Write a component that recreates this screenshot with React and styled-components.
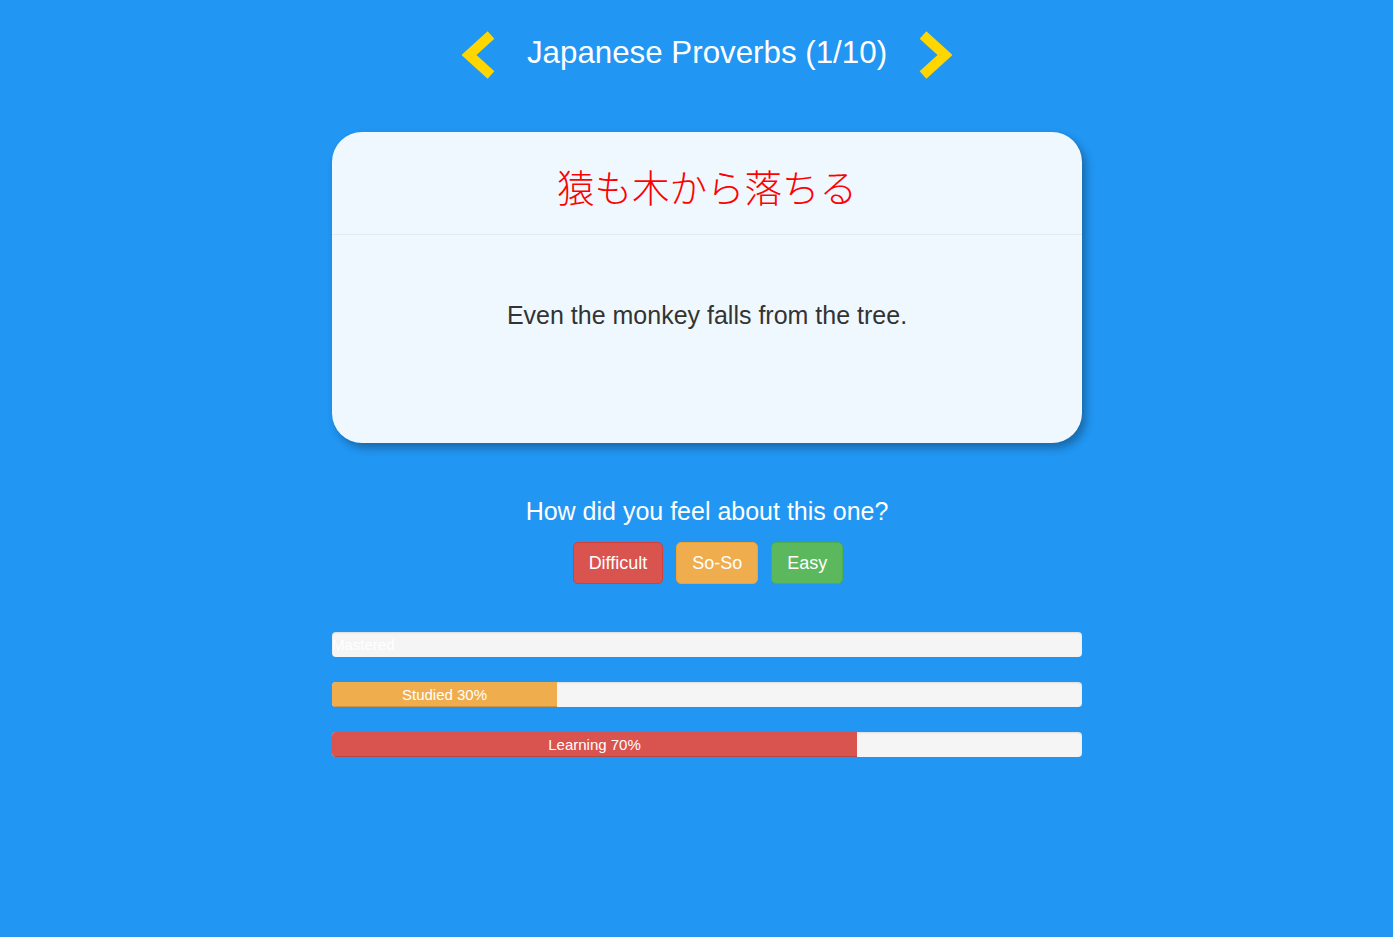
import React from 'react';
import styled, { createGlobalStyle } from 'styled-components';

const GlobalStyle = createGlobalStyle`
  html, body {
    margin: 0;
    padding: 0;
    background: #2196f3;
  }
  body {
    font-family: "Liberation Sans", Arial, sans-serif;
    min-height: 937px;
  }
`;

const progress = [
  { label: 'Mastered', value: 0, color: '#5cb85c' },
  { label: 'Studied', value: 30, color: '#f0ad4e' },
  { label: 'Learning', value: 70, color: '#d9534f' }
];

const Chevron = ({ dir }) => (
  <svg width="34" height="48" viewBox="0 0 34 48">
    <polyline
      points={dir === 'left' ? '29,4 7,24 29,44' : '5,4 27,24 5,44'}
      fill="none"
      stroke="#ffd600"
      strokeWidth="10"
      strokeLinejoin="miter"
    />
  </svg>
);

export default function App() {
  return (
    <Page>
      <GlobalStyle />
      <Header>
        <NavButton><Chevron dir="left" /></NavButton>
        <Title>Japanese Proverbs (1/10)</Title>
        <NavButton><Chevron dir="right" /></NavButton>
      </Header>

      <Card>
        <CardHead>猿も木から落ちる</CardHead>
        <CardBody>Even the monkey falls from the tree.</CardBody>
      </Card>

      <Question>How did you feel about this one?</Question>
      <Buttons>
        <RateButton $bg="#d9534f" $border="#d43f3a">Difficult</RateButton>
        <RateButton $bg="#f0ad4e" $border="#eea236">So-So</RateButton>
        <RateButton $bg="#5cb85c" $border="#4cae4c">Easy</RateButton>
      </Buttons>

      <Bars>
        {progress.map(p => (
          <Track key={p.label}>
            <Fill $color={p.color} style={{ width: p.value + '%' }}>
              {p.value ? `${p.label} ${p.value}%` : p.label}
            </Fill>
          </Track>
        ))}
      </Bars>
    </Page>
  );
}

const Page = styled.div`
  display: flex;
  flex-direction: column;
  align-items: center;
  padding: 31px 0 0 21px;
`;

const Header = styled.div`
  display: flex;
  align-items: center;
  gap: 31px;
  height: 48px;
`;

const NavButton = styled.div`
  display: flex;
  width: 34px;
  height: 48px;
  cursor: pointer;
`;

const Title = styled.h1`
  margin: 0;
  color: #fff;
  font-size: 31.3px;
  font-weight: normal;
  line-height: 40px;
  margin-top: -5px;
`;

const Card = styled.div`
  margin-top: 53px;
  width: 750px;
  height: 311px;
  background: #f0f8ff;
  border-radius: 30px;
  box-shadow: 4px 5px 8px rgba(0, 0, 0, 0.3);
  display: flex;
  flex-direction: column;
  overflow: hidden;
`;

const CardHead = styled.div`
  height: 103px;
  box-sizing: border-box;
  padding-top: 32px;
  border-bottom: 1px solid #e3eaf0;
  text-align: center;
  color: #ff0000;
  font-size: 37.5px;
  line-height: 44px;
  font-weight: 300;
  font-family: "Noto Sans CJK JP", sans-serif;
`;

const CardBody = styled.div`
  padding-top: 66px;
  text-align: center;
  color: #333;
  font-size: 25px;
  line-height: 28px;
`;

const Question = styled.div`
  margin-top: 54px;
  color: #fff;
  font-size: 25px;
  line-height: 28px;
`;

const Buttons = styled.div`
  display: flex;
  gap: 13px;
  margin-top: 17px;
  margin-left: 2px;
`;

const RateButton = styled.button`
  font-family: "Liberation Sans", Arial, sans-serif;
  font-size: 18px;
  line-height: 20px;
  padding: 10px 15px;
  color: #fff;
  background: ${p => p.$bg};
  border: 1px solid ${p => p.$border};
  border-radius: 5px;
  cursor: pointer;
`;

const Bars = styled.div`
  margin-top: 48px;
  width: 750px;
  display: flex;
  flex-direction: column;
  gap: 25px;
`;

const Track = styled.div`
  height: 25px;
  background: #f5f5f5;
  border-radius: 4px;
  box-shadow: inset 0 1px 2px rgba(0, 0, 0, 0.1);
  overflow: hidden;
`;

const Fill = styled.div`
  height: 100%;
  background: ${p => p.$color};
  color: #fff;
  font-size: 15px;
  line-height: 25px;
  text-align: center;
  white-space: nowrap;
  box-shadow: inset 0 -1px 0 rgba(0, 0, 0, 0.15);
`;
